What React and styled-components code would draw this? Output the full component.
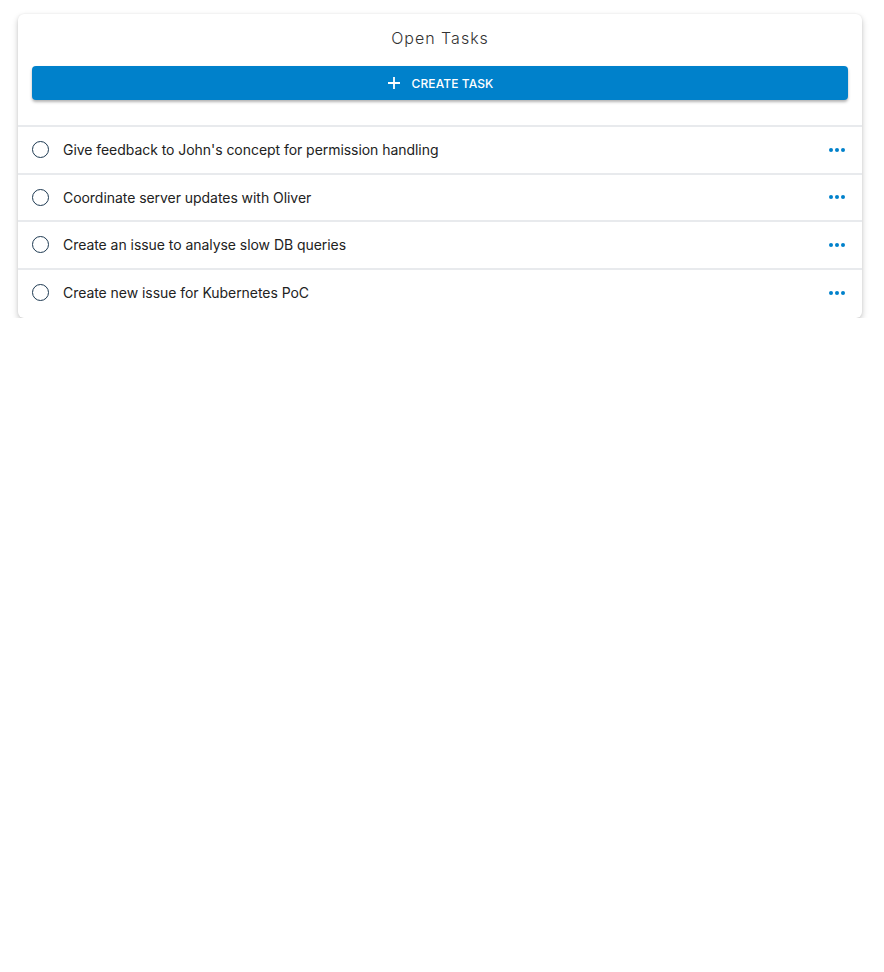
import React from 'react';
import styled, { createGlobalStyle } from 'styled-components';

const GlobalStyle = createGlobalStyle`
  body {
    margin: 0;
    background: #fff;
    font-family: Inter, "Noto Sans", sans-serif;
  }
  * {
    box-sizing: border-box;
  }
`;

const tasks = [
  "Give feedback to John's concept for permission handling",
  'Coordinate server updates with Oliver',
  'Create an issue to analyse slow DB queries',
  'Create new issue for Kubernetes PoC',
];

const Page = styled.div`
  padding: 14px 22px 0 18px;
`;

const Card = styled.div`
  background: #fff;
  border-radius: 6px;
  box-shadow: 0 3px 6px rgba(0, 0, 0, 0.22), 0 0 2px rgba(0, 0, 0, 0.08);
  overflow: hidden;
`;

const Header = styled.div`
  padding: 12px 14px 25px;
  display: flex;
  flex-direction: column;
  align-items: stretch;
`;

const Title = styled.h2`
  margin: 0 0 16px;
  text-align: center;
  font-size: 16px;
  line-height: 24px;
  font-weight: 300;
  letter-spacing: 1px;
  color: #333;
`;

const CreateButton = styled.button`
  height: 34px;
  border: none;
  border-radius: 4px;
  background: #0081cb;
  color: #fff;
  font-family: inherit;
  font-size: 12px;
  font-weight: 500;
  letter-spacing: 0.1px;
  display: flex;
  align-items: center;
  justify-content: center;
  gap: 11px;
  box-shadow: 0 2px 3px rgba(0, 0, 0, 0.3);
  cursor: pointer;
`;

const List = styled.ul`
  list-style: none;
  margin: 0;
  padding: 0;
`;

const Row = styled.li`
  height: 47.5px;
  border-top: 2px solid #e8eaed;
  display: flex;
  align-items: center;
  padding: 0 16px 0 14px;
  &:last-child {
    height: 50px;
    padding-bottom: 2px;
  }
`;

const Check = styled.span`
  width: 17px;
  height: 17px;
  border: 1.8px solid #1e3a52;
  border-radius: 50%;
  flex: none;
`;

const Label = styled.span`
  margin-left: 14px;
  flex: 1;
  font-size: 14px;
  letter-spacing: -0.05px;
  color: #222;
`;

const More = styled.span`
  display: flex;
  gap: 2px;
  padding-right: 1px;
  & > i {
    width: 4px;
    height: 4px;
    border-radius: 50%;
    background: #0081cb;
  }
`;

export default function App() {
  return (
    <Page>
      <GlobalStyle />
      <Card>
        <Header>
          <Title>Open Tasks</Title>
          <CreateButton>
            <svg width="14" height="14" viewBox="0 0 14 14">
              <path d="M7 1v12M1 7h12" stroke="#fff" strokeWidth="1.8" />
            </svg>
            CREATE TASK
          </CreateButton>
        </Header>
        <List>
          {tasks.map((t) => (
            <Row key={t}>
              <Check />
              <Label>{t}</Label>
              <More>
                <i />
                <i />
                <i />
              </More>
            </Row>
          ))}
        </List>
      </Card>
    </Page>
  );
}
